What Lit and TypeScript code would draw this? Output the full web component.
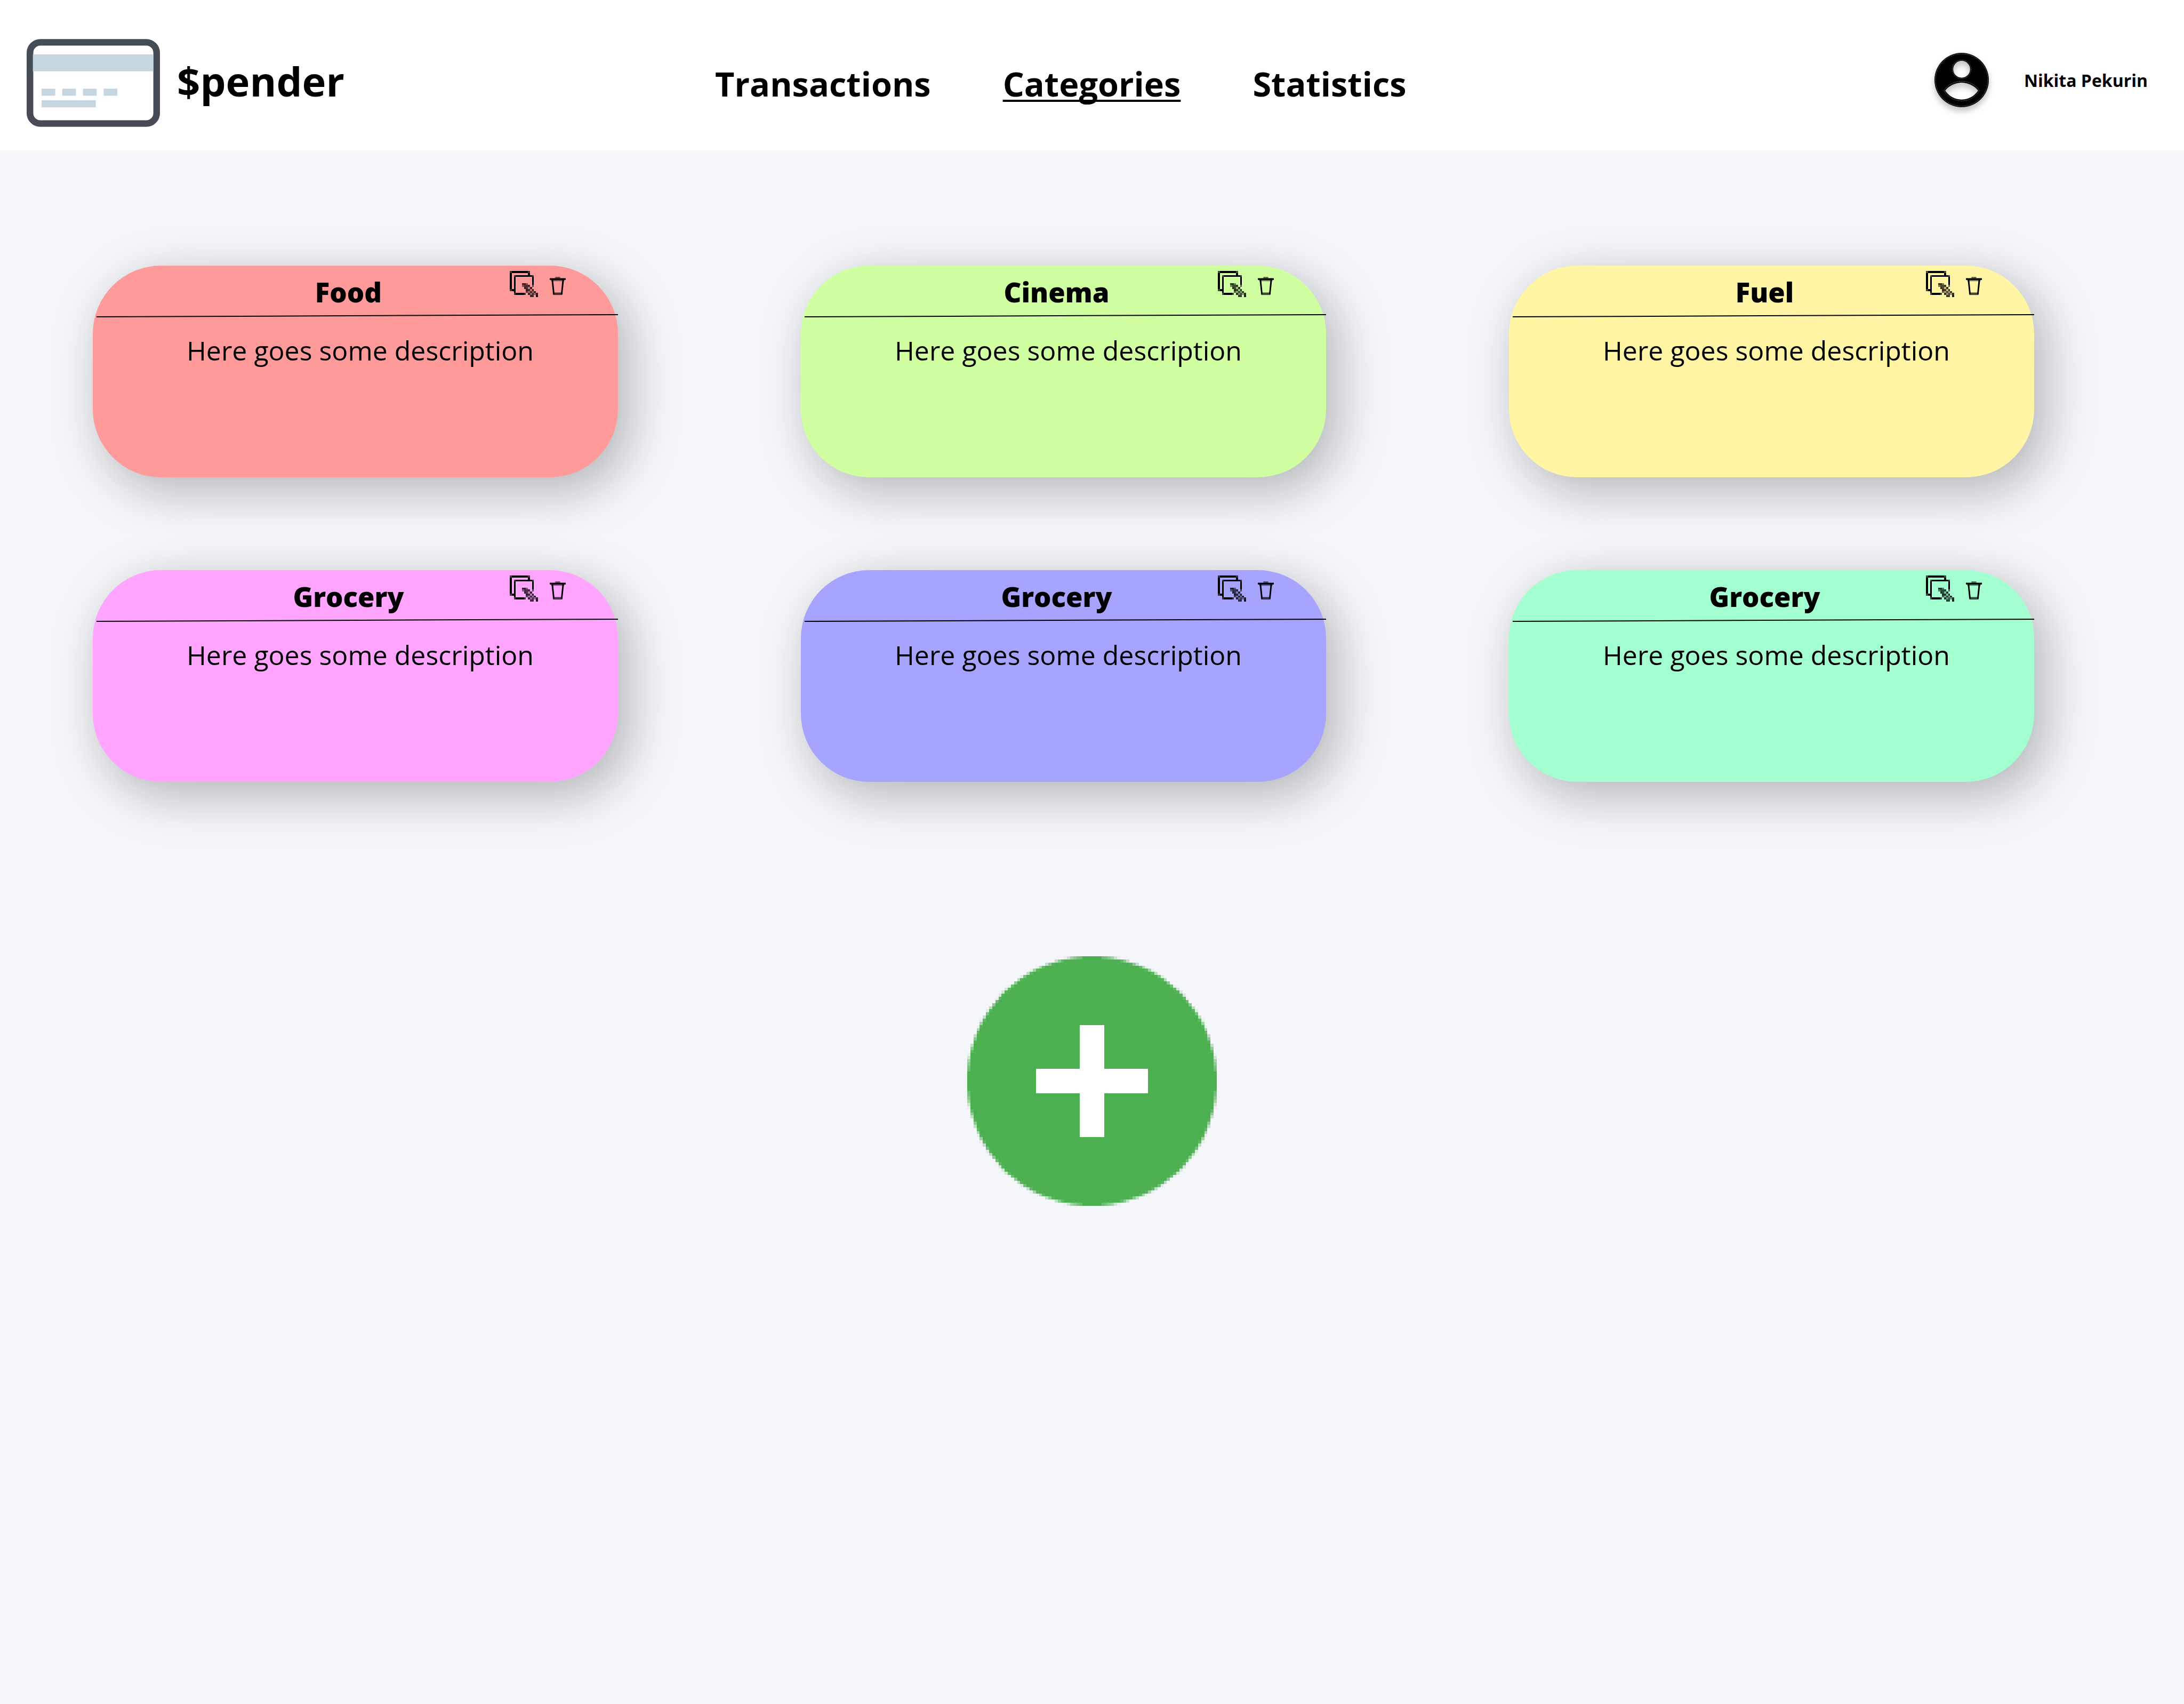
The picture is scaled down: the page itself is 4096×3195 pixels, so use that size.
import { LitElement, html, svg, css } from "lit";
import { customElement, property } from "lit/decorators.js";

interface Category {
  name: string;
  description: string;
  color: string;
}

const CATEGORIES: Category[] = [
  { name: "Food", description: "Here goes some description", color: "#ff9a9a" },
  { name: "Cinema", description: "Here goes some description", color: "#d0ffa2" },
  { name: "Fuel", description: "Here goes some description", color: "#fff5a5" },
  { name: "Grocery", description: "Here goes some description", color: "#ffa4ff" },
  { name: "Grocery", description: "Here goes some description", color: "#a6a4ff" },
  { name: "Grocery", description: "Here goes some description", color: "#a3ffcf" },
];

/* Cells of the pencil over the copied sheets: column, row, opacity. */
const PENCIL: [number, number, number][] = [
  [6, 6, 0.8], [7, 6, 0.8], [8, 6, 0.5],
  [6, 7, 0.5], [7, 7, 0.7], [8, 7, 0.7], [9, 7, 0.75], [11, 7, 0.6],
  [7, 8, 0.8], [8, 8, 0.7], [9, 8, 0.25], [10, 8, 0.8],
  [8, 9, 0.8], [9, 9, 0.75], [10, 9, 0.25], [11, 9, 0.8],
  [8, 10, 0.6], [9, 10, 0.3], [10, 10, 0.75], [11, 10, 0.3], [12, 10, 0.8],
  [9, 11, 0.8], [10, 11, 0.4], [11, 11, 0.7], [12, 11, 0.4], [13, 11, 0.8],
  [10, 12, 0.75], [11, 12, 0.75], [13, 12, 0.9],
];

const GRID = 80;

/* The disc is drawn on an 80-cell grid: one run of full cells per row, then softer cells at its rim. */
function discCells() {
  const r = GRID / 2;
  const cells: unknown[] = [];
  for (let y = 0; y < GRID; y++) {
    let first = -1;
    for (let x = 0; x < r; x++) {
      let hits = 0;
      for (let i = 0; i < 4; i++) {
        for (let j = 0; j < 4; j++) {
          if (Math.hypot(x + (i + 0.5) / 4 - r, y + (j + 0.5) / 4 - r) <= r) hits++;
        }
      }
      if (hits === 16) {
        first = x;
        break;
      }
      if (hits > 0) {
        const o = hits / 16;
        cells.push(svg`<rect x=${x} y=${y} width="1" height="1" opacity=${o} />`);
        cells.push(svg`<rect x=${GRID - 1 - x} y=${y} width="1" height="1" opacity=${o} />`);
      }
    }
    if (first >= 0) {
      cells.push(svg`<rect x=${first} y=${y} width=${GRID - 2 * first} height="1" />`);
    }
  }
  return cells;
}

@customElement("category-card")
export class CategoryCard extends LitElement {
  @property() name = "";
  @property() description = "";

  static styles = css`
    :host {
      display: block;
      color: #000;
    }
    .head {
      display: grid;
      grid-template-columns: 1fr auto 1fr;
      height: 88px;
    }
    .title {
      grid-column: 2;
      margin: 0;
      padding: 13px 26px 0 0;
      font-size: 51px;
      line-height: 72px;
      font-weight: 800;
    }
    .actions {
      display: flex;
      justify-content: flex-end;
      align-items: flex-start;
      gap: 22px;
      padding: 10px 98px 0 0;
    }
    .action {
      display: block;
      margin: 0;
      padding: 0;
      border: 0;
      background: none;
      cursor: pointer;
    }
    .icon {
      display: block;
    }
    .rule {
      display: block;
      width: 100%;
      height: 10px;
    }
    .text {
      margin: 0;
      padding: 25px 0 0 18px;
      text-align: center;
      font-size: 50px;
      line-height: 72px;
      font-weight: 400;
    }
  `;

  render() {
    return html`
      <div class="head">
        <h2 class="title">${this.name}</h2>
        <div class="actions">
          <button class="action" aria-label="Edit">
            <svg class="icon" width="53" height="49" viewBox="0 0 14 13" shape-rendering="crispEdges">
              <path d="M1 0h8v1H1zM0 1h1v8H0zM9 1h1v1H9zM1 9h1v1H1zM3 2h8v1H3zM2 3h1v8H2zM11 3h1v4h-1zM3 11h4v1H3z" />
              <path
                opacity="0.7"
                d="M0 0h1v1H0zM9 0h1v1H9zM0 9h1v1H0zM2 2h1v1H2zM11 2h1v1h-1zM2 11h1v1H2zM7 11h1v1H7z"
              />
              ${PENCIL.map(([x, y, o]) => svg`<rect x=${x} y=${y} width="1" height="1" opacity=${o} />`)}
            </svg>
          </button>
          <button class="action" aria-label="Delete">
            <svg class="icon" width="30" height="49" viewBox="0 -43 117 189">
              <path d="M0 9h117v13H0z" />
              <path opacity="0.65" d="M40 0h36v9H40z" />
              <path opacity="0.5" d="M10 22h97v9H10z" />
              <path d="M13 22h12l9 92v12H23v-12zM104 22H92l-9 92v12h11v-12z" />
              <path opacity="0.7" d="M25 114h67v18H25z" />
            </svg>
          </button>
        </div>
      </div>
      <svg class="rule" viewBox="0 0 985 10" preserveAspectRatio="none">
        <line x1="7" y1="8" x2="985" y2="4" stroke="#000" stroke-width="2" />
      </svg>
      <p class="text">${this.description}</p>
    `;
  }
}

@customElement("app-root")
export class AppRoot extends LitElement {
  static styles = css`
    :host {
      display: block;
      min-height: 100vh;
      background: #f4f6fa;
      font-family: "Open Sans", sans-serif;
      color: #000;
    }
    .header {
      display: grid;
      grid-template-columns: 13fr auto 14fr;
      box-sizing: border-box;
      height: 282px;
      padding: 0 68px 0 50px;
      background: #fff;
    }
    .brand {
      display: flex;
      align-items: center;
      gap: 32px;
      padding-top: 28px;
      color: #000;
      text-decoration: none;
      font-size: 76px;
      font-weight: 700;
    }
    .brand-name {
      padding-bottom: 7px;
    }
    .nav {
      display: flex;
      align-items: center;
      gap: 135px;
      padding-top: 32px;
    }
    .link {
      color: #000;
      text-decoration: none;
      font-size: 63px;
      line-height: 90px;
      font-weight: 700;
    }
    .link.current {
      text-decoration: underline;
      text-decoration-skip-ink: none;
      text-decoration-thickness: 4px;
      text-underline-offset: 6px;
    }
    .user {
      display: flex;
      align-items: center;
      justify-content: flex-end;
      gap: 66px;
      padding-top: 18px;
      font-size: 32px;
      font-weight: 700;
    }
    .avatar {
      display: block;
      overflow: visible;
      filter: drop-shadow(0 7px 6px rgba(0, 0, 0, 0.25));
    }
    .grid {
      display: grid;
      grid-template-columns: repeat(3, 1fr);
      gap: 174px 343px;
      padding: 216px 281px 0 174px;
    }
    .card {
      height: 397px;
      border-radius: 128px;
      box-shadow: 20px 24px 90px 4px rgba(0, 0, 0, 0.26);
    }
    .add-row {
      display: flex;
      justify-content: center;
      padding-top: 327px;
    }
    .add {
      display: block;
      padding: 0;
      border: 0;
      background: none;
      cursor: pointer;
    }
    .disc {
      display: block;
    }
  `;

  render() {
    return html`
      <header class="header">
        <a class="brand" href="#">
          <svg width="250" height="165" viewBox="0 0 322 212" aria-hidden="true">
            <rect x="8" y="8" width="306" height="196" rx="25" fill="#fff" stroke="#464c56" stroke-width="16" />
            <path fill="#c6d6e0" d="M15 37h291v41H15zM36 120h33v17H36zM86 120h33v17H86zM136 120h33v17h-33zM186 120h33v17h-33zM36 148h131v17H36z" />
          </svg>
          <span class="brand-name">$pender</span>
        </a>
        <nav class="nav">
          <a class="link" href="#transactions">Transactions</a>
          <a class="link current" href="#categories" aria-current="page">Categories</a>
          <a class="link" href="#statistics">Statistics</a>
        </nav>
        <div class="user">
          <svg class="avatar" width="102" height="102" viewBox="-66 -66 132 132" aria-hidden="true">
            <path
              fill-rule="evenodd"
              d="M-66 0a66 66 0 1 0 132 0a66 66 0 1 0-132 0zM-20.5-26a20.5 20.5 0 1 0 41 0a20.5 20.5 0 1 0-41 0zM-40 26C-32 14-14 6.5 0 6.5S32 14 40 26C31 39 17 47.5 0 47.5S-31 39-40 26z"
            />
            <g fill="none" stroke="#fff" stroke-width="0.6" stroke-dasharray="3 1" opacity="0.8">
              <circle r="63.5" />
              <circle cy="-26" r="22.7" />
              <path d="M-43 26C-36 12-16 3 0 3S36 12 43 26C34 41 18 50.5 0 50.5S-34 41-43 26z" />
            </g>
          </svg>
          <span>Nikita Pekurin</span>
        </div>
      </header>
      <main>
        <section class="grid">
          ${CATEGORIES.map(
            (c) => html`<category-card
              class="card"
              style="background:${c.color}"
              .name=${c.name}
              .description=${c.description}
            ></category-card>`
          )}
        </section>
        <div class="add-row">
          <button class="add" aria-label="Add category">
            <svg class="disc" width="468" height="468" viewBox="0 0 80 80" shape-rendering="crispEdges">
              <g fill="#4caf50">${discCells()}</g>
              <path fill="#fff" d="M36 22h8v14h14v8H44v14h-8V44H22v-8h14z" />
            </svg>
          </button>
        </div>
      </main>
    `;
  }
}
